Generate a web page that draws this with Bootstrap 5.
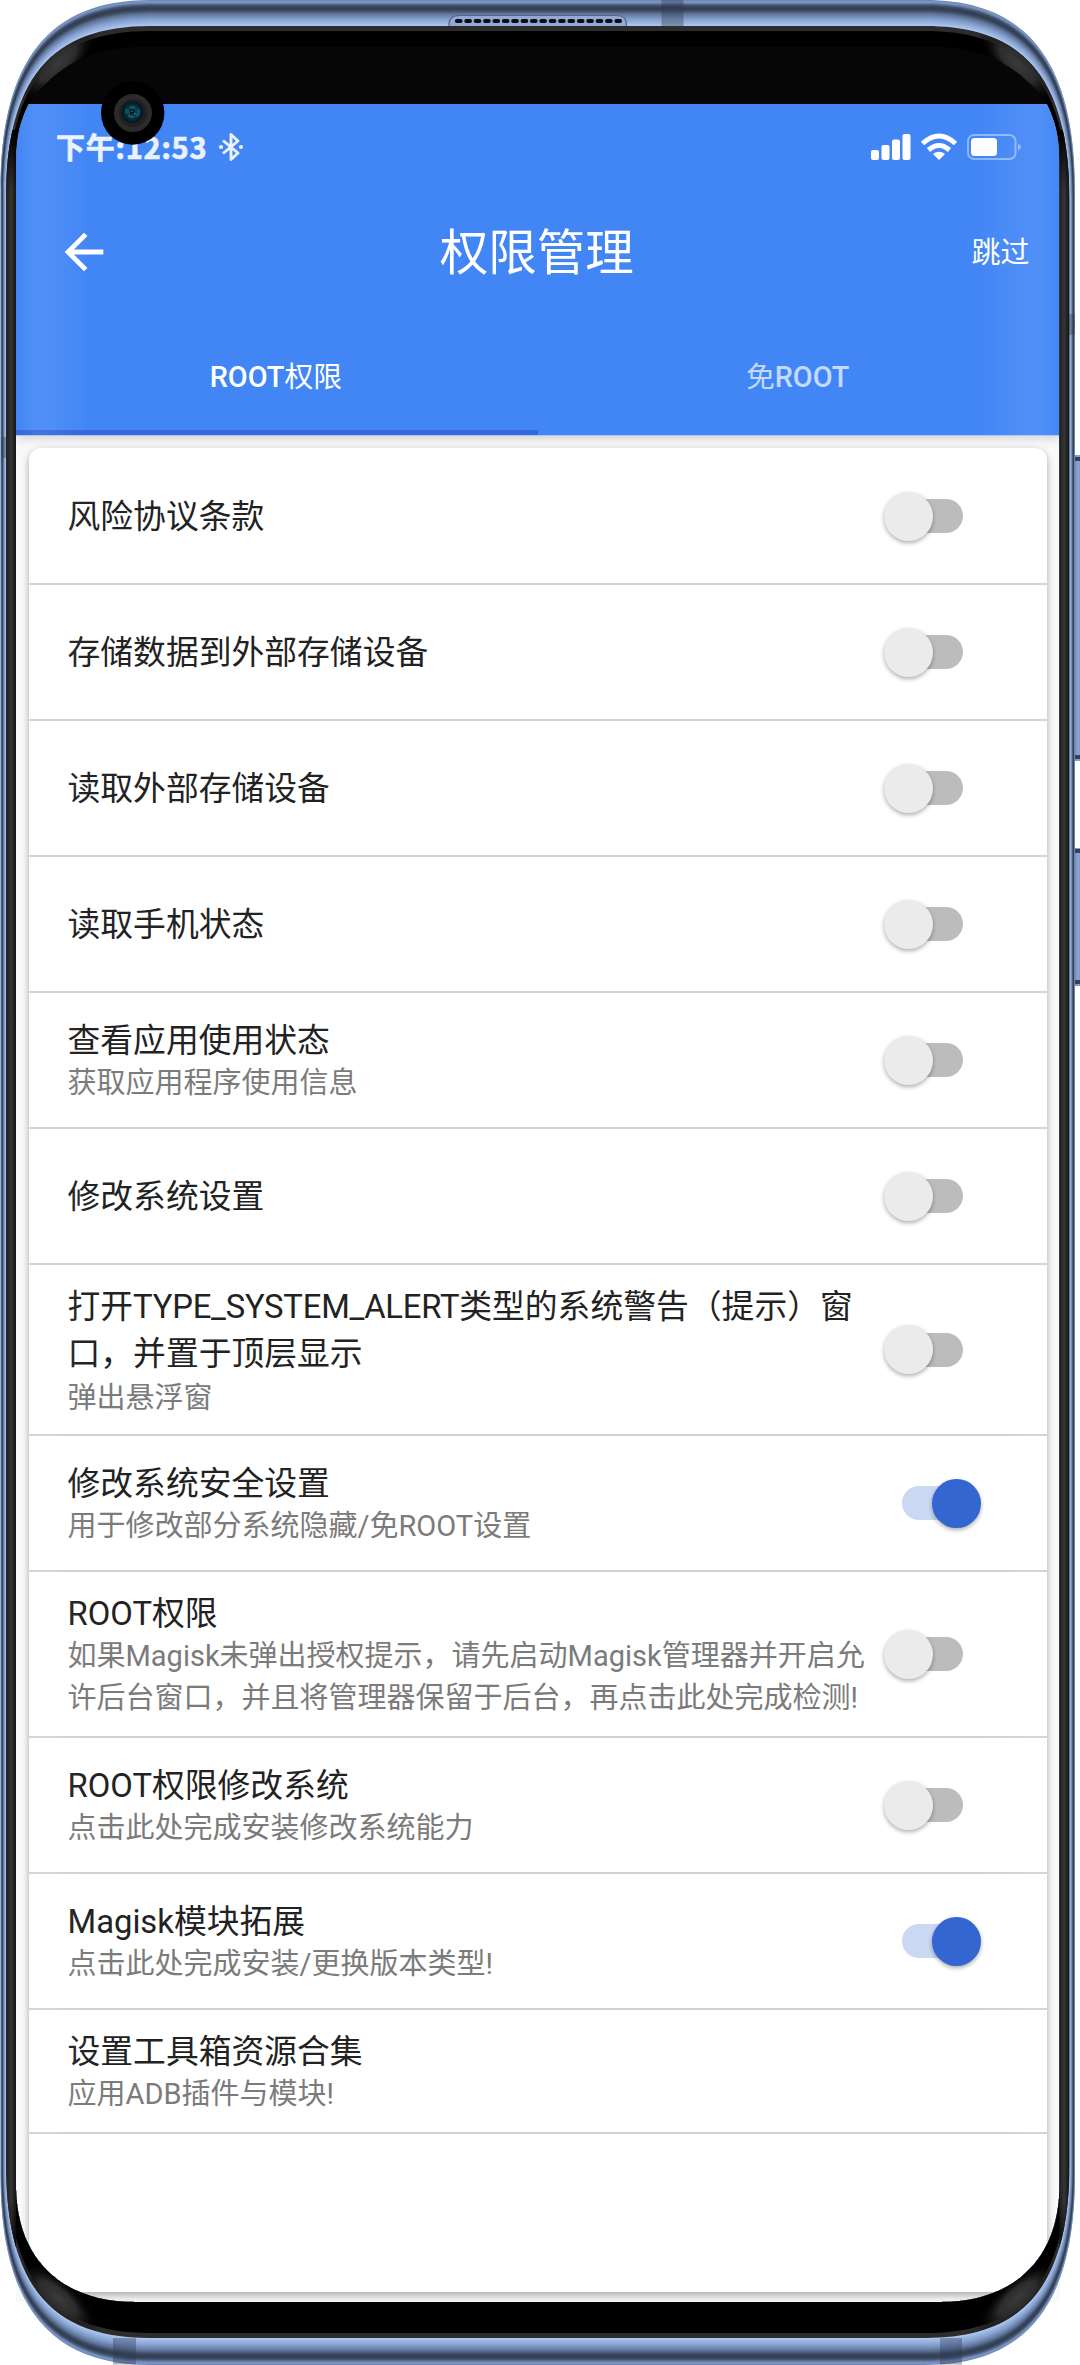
<!DOCTYPE html>
<html lang="zh-CN">
<head>
<meta charset="utf-8">
<meta name="viewport" content="width=device-width, initial-scale=1">
<title>权限管理</title>
<link href="https://cdn.jsdelivr.net/npm/bootstrap@5.3.0/dist/css/bootstrap.min.css" rel="stylesheet">
<style>
  body { font-family: Roboto, "Noto Sans CJK SC", sans-serif; background: #fff; }
  .phone { width: 1080px; height: 2365px; padding: 104px 0 0 16px; }
  .frame { left: 0; top: 0; z-index: 5; pointer-events: none; }
  .screen { width: 1043.5px; height: 2198px; background: #f9f9f9; }
  .glow { inset: 0; z-index: 3; pointer-events: none;
    background:
      linear-gradient(90deg, rgba(255,255,255,0) 0, rgba(255,255,255,.08) 20px, rgba(255,255,255,.07) 34px, rgba(255,255,255,0) 72px),
      linear-gradient(270deg, rgba(255,255,255,0) 0, rgba(255,255,255,.08) 20px, rgba(255,255,255,.07) 34px, rgba(255,255,255,0) 82px); }
  .topbar { height: 332px; background: #4286f6; color: #fff; border-bottom: 1px solid #a9c6f8;
    box-shadow: 0 2px 10px rgba(0,0,0,.18); z-index: 1; }
  .status { height: 86px; padding: 0 37px 0 40px; }
  .clock { font: 700 29px/1 "Noto Sans CJK SC", sans-serif; letter-spacing: .75px; color: #ebf2fe; padding-bottom: 2px; -webkit-text-stroke: .7px #ebf2fe; }
  .appbar { height: 124px; padding: 0 30px 0 39px; }
  .app-title { font-size: 48.5px; line-height: 1; padding: 5px 11px 0 0; }
  .skip { font-size: 29px; line-height: 1; padding-top: 3px; }
  .tabs { height: 121px; }
  .tab-item { font-size: 28.8px; font-weight: 500; border-bottom: 5px solid transparent; padding: 12px 2px 0 0; color: #c3dafc; }
  .tab-item.current { color: #fff; border-color: #3468d8; }
  .tab-item span { font-weight: 400; }
  .panel { margin: 12px 13px 0 13px; padding-top: 1px; height: 1844px; background: #fff; border-radius: 12px 12px 0 0;
    box-shadow: 0 2px 7px rgba(0,0,0,.22), 0 5px 8px rgba(0,0,0,.14); }
  .perm { height: 136px; padding: 0 84px 0 38.5px; border-bottom: 2px solid #d2d2d2; }
  .perm.tall { height: 171px; }
  .perm.mid { height: 166px; }
  .perm.last { height: 124px; }
  .p-title { font-size: 32.8px; line-height: 43.5px; color: #222; white-space: nowrap; padding-top: 4px; }
  .p-title.double { line-height: 47.5px; margin-bottom: -2px; }
  .p-title.double span { letter-spacing: -.22px; }
  .p-sub { font-size: 29px; line-height: 42.5px; margin-top: -1.5px; color: #7b7b7b; white-space: nowrap; }
  .toggle { width: 97px; height: 49px; padding: 0 18px; margin-right: -18px; }
  .toggle .track { width: 61px; height: 34px; border-radius: 17px; background: #bcbcbc; }
  .toggle .thumb { width: 49px; height: 49px; top: 0; left: 0; border-radius: 50%; background: #ebebeb;
    box-shadow: 0 2px 4px rgba(0,0,0,.32); }
  .toggle.on .track { background: #cad8f3; }
  .toggle.on .thumb { left: 48px; background: #3366d1; }
</style>
</head>
<body>
<div class="phone position-relative overflow-hidden">
  <main class="screen position-relative d-flex flex-column overflow-hidden">
    <header class="topbar position-relative flex-shrink-0">
      <div class="status d-flex align-items-center justify-content-between">
        <div class="d-flex align-items-center">
          <span class="clock">下午:12:53</span>
          <svg class="ms-2" width="32" height="32" viewBox="0 0 30 32" fill="none" stroke="#ebf2fe" stroke-width="2.900" stroke-linejoin="round"><path d="M7 9.500 22 22 15 28.500V3.500L22 10 7 22.500"/><circle cx="5" cy="16" r="2.100" fill="#ebf2fe" stroke="none"/><circle cx="25" cy="16" r="2.100" fill="#ebf2fe" stroke="none"/></svg>
        </div>
        <svg width="152" height="30" viewBox="0 0 152 30" fill="#fff">
          <rect x="0" y="18" width="8" height="10" rx="2"/><rect x="10.500" y="13" width="8" height="15" rx="2"/><rect x="21" y="7.500" width="8" height="20.500" rx="2"/><rect x="31.500" y="2" width="8" height="26" rx="2"/>
          <g fill="none" stroke="#fff" stroke-width="5"><path d="M51.500 11.500Q68 -3.500 84.500 11.500"/><path d="M57.500 18Q68 9 78.500 18"/></g>
          <path d="M62 22Q68 17.500 74 22L68 28Z"/>
          <rect x="97" y="3" width="47.500" height="24" rx="6" fill="none" stroke="#8db6fa" stroke-width="2"/><rect x="100" y="6" width="26" height="18" rx="3.500"/><path d="M147 11.500Q150 13 150 15T147 18.500Z" fill="#8db6fa"/>
        </svg>
      </div>
      <div class="appbar d-flex align-items-center justify-content-between">
        <svg width="58" height="58" viewBox="0 0 24 24" fill="#fff"><path d="M20 11H7.830l5.590-5.590L12 4l-8 8 8 8 1.410-1.410L7.830 13H20v-2z"/></svg>
        <div class="app-title">权限管理</div>
        <div class="skip">跳过</div>
      </div>
      <nav class="tabs d-flex text-center">
        <div class="tab-item current flex-fill w-50 d-flex align-items-center justify-content-center">ROOT<span>权限</span></div>
        <div class="tab-item flex-fill w-50 d-flex align-items-center justify-content-center"><span>免</span>ROOT</div>
      </nav>
    </header>
    <section class="panel flex-shrink-0">
      <div class="perm d-flex align-items-center justify-content-between"><div class="p-title">风险协议条款</div><div class="toggle position-relative d-flex align-items-center"><div class="track"></div><div class="thumb position-absolute"></div></div></div>
      <div class="perm d-flex align-items-center justify-content-between"><div class="p-title">存储数据到外部存储设备</div><div class="toggle position-relative d-flex align-items-center"><div class="track"></div><div class="thumb position-absolute"></div></div></div>
      <div class="perm d-flex align-items-center justify-content-between"><div class="p-title">读取外部存储设备</div><div class="toggle position-relative d-flex align-items-center"><div class="track"></div><div class="thumb position-absolute"></div></div></div>
      <div class="perm d-flex align-items-center justify-content-between"><div class="p-title">读取手机状态</div><div class="toggle position-relative d-flex align-items-center"><div class="track"></div><div class="thumb position-absolute"></div></div></div>
      <div class="perm d-flex align-items-center justify-content-between"><div><div class="p-title">查看应用使用状态</div><div class="p-sub">获取应用程序使用信息</div></div><div class="toggle position-relative d-flex align-items-center"><div class="track"></div><div class="thumb position-absolute"></div></div></div>
      <div class="perm d-flex align-items-center justify-content-between"><div class="p-title">修改系统设置</div><div class="toggle position-relative d-flex align-items-center"><div class="track"></div><div class="thumb position-absolute"></div></div></div>
      <div class="perm tall d-flex align-items-center justify-content-between"><div><div class="p-title double">打开<span>TYPE_SYSTEM_ALERT</span>类型的系统警告（提示）窗<br>口，并置于顶层显示</div><div class="p-sub">弹出悬浮窗</div></div><div class="toggle position-relative d-flex align-items-center"><div class="track"></div><div class="thumb position-absolute"></div></div></div>
      <div class="perm d-flex align-items-center justify-content-between"><div><div class="p-title">修改系统安全设置</div><div class="p-sub">用于修改部分系统隐藏/免ROOT设置</div></div><div class="toggle on position-relative d-flex align-items-center"><div class="track"></div><div class="thumb position-absolute"></div></div></div>
      <div class="perm mid d-flex align-items-center justify-content-between"><div><div class="p-title">ROOT权限</div><div class="p-sub">如果Magisk未弹出授权提示，请先启动Magisk管理器并开启允<br>许后台窗口，并且将管理器保留于后台，再点击此处完成检测!</div></div><div class="toggle position-relative d-flex align-items-center"><div class="track"></div><div class="thumb position-absolute"></div></div></div>
      <div class="perm d-flex align-items-center justify-content-between"><div><div class="p-title">ROOT权限修改系统</div><div class="p-sub">点击此处完成安装修改系统能力</div></div><div class="toggle position-relative d-flex align-items-center"><div class="track"></div><div class="thumb position-absolute"></div></div></div>
      <div class="perm d-flex align-items-center justify-content-between"><div><div class="p-title">Magisk模块拓展</div><div class="p-sub">点击此处完成安装/更换版本类型!</div></div><div class="toggle on position-relative d-flex align-items-center"><div class="track"></div><div class="thumb position-absolute"></div></div></div>
      <div class="perm last d-flex align-items-center"><div><div class="p-title">设置工具箱资源合集</div><div class="p-sub">应用ADB插件与模块!</div></div></div>
    </section>
    <div class="glow position-absolute"></div>
  </main>

  <svg class="frame position-absolute" width="1080" height="2365" viewBox="0 0 1080 2365">
    <defs>
      <linearGradient id="key" x1="0" x2="1" y1="0" y2="0"><stop offset="0" stop-color="#45567a"/><stop offset=".3" stop-color="#7089ba"/><stop offset=".6" stop-color="#8ba5d8"/><stop offset="1" stop-color="#6f89ba"/></linearGradient>
      <linearGradient id="side" x1="0" x2="1" y1="0" y2="0"><stop offset="0" stop-color="#202020"/><stop offset=".5" stop-color="#353535"/><stop offset="1" stop-color="#151515"/></linearGradient>
      <linearGradient id="fadeDown" x1="0" x2="0" y1="0" y2="1"><stop offset="0" stop-color="#000"/><stop offset="1" stop-color="#000" stop-opacity="0"/></linearGradient>
      <linearGradient id="fadeUp" x1="0" x2="0" y1="1" y2="0"><stop offset="0" stop-color="#000"/><stop offset="1" stop-color="#000" stop-opacity="0"/></linearGradient>
      <radialGradient id="shine"><stop offset="0" stop-color="#3a3a3a"/><stop offset=".45" stop-color="#2c2c2c"/><stop offset="1" stop-color="#000" stop-opacity="0"/></radialGradient>
      <radialGradient id="lens"><stop offset="0" stop-color="#0c5560"/><stop offset=".35" stop-color="#0a4a58"/><stop offset=".6" stop-color="#07303f"/><stop offset="1" stop-color="#0b1118"/></radialGradient>
      <clipPath id="ring"><path clip-rule="evenodd" id="ringPath"/></clipPath>
    </defs>
    <g id="keys">
      <rect x="1072" y="455" width="10" height="306" rx="2" fill="url(#key)"/><path d="M1073 457h7v4h-7zM1073 755h7v4h-7z" fill="#344158"/>
      <rect x="1072" y="848" width="10" height="138" rx="2" fill="url(#key)"/><path d="M1073 849h7v4h-7zM1073 980h7v4h-7z" fill="#344158"/>
    </g>
    <g id="metal"></g>
    <g fill="#2d3a52" fill-opacity=".38"><path d="M661.500 0h22v26h-22zM113 2338h23v26.500h-23zM940 2338h22v26.500h-22zM1 437h5v21h-5zM1069 314h6v21h-6z"/></g>
    <path d="M449 26V24Q449 15.500 460 15.500H616Q626.500 15.500 626.500 24V26" fill="#91a9d4" stroke="#566785" stroke-width="1.200"/>
    <path d="M457 21H620" stroke="#0b0d12" stroke-width="4.200" stroke-linecap="round" stroke-dasharray="3.500 5.880"/>
    <g id="bezel"></g>
    <circle cx="132.700" cy="113" r="31.700" fill="#000"/>
    <circle cx="133" cy="113" r="16.500" fill="#202020" stroke="#2b2b2b" stroke-width="5"/>
    <circle cx="132.500" cy="112" r="11" fill="url(#lens)"/>
    <ellipse cx="132.500" cy="112" rx="6.500" ry="5" fill="none" stroke="#0e6a78" stroke-width="1.400" stroke-dasharray="5 3"/>
    <path d="M130 109.500h5v5h-5z" fill="#03181d"/><path d="M131.500 111h1v1h-1zM134 113h1v1h-1z" fill="#4fc3cf"/>
  </svg>
</div>
<script>
  // Rounded phone silhouette: side inset x, top y, bottom b, corner extents and handles
  function outline(x, y, b, ex, ey, hx, hy) {
    const r = 1075.5 - x, X = v => 1075.5 - v, B = v => b - (v - y);
    return `M${ex} ${y}H${X(ex)}C${X(hx)} ${y} ${r} ${hy} ${r} ${ey}V${B(ey)}C${r} ${B(hy)} ${X(hx)} ${b} ${X(ex)} ${b}H${ex}C${hx} ${b} ${x} ${B(hy)} ${x} ${B(ey)}V${ey}C${x} ${hy} ${hx} ${y} ${ex} ${y}Z`;
  }
  const mix = (a, b, t) => a + (b - a) * t;
  const tones = [[0,110,137,184],[.06,128,156,203],[.2,62,77,103],[.3,50,61,80],[.4,62,77,102],[.5,92,113,148],[.7,130,157,203],[.95,169,195,238],[1,190,208,240]];
  function tone(t) {
    let i = 1; while (tones[i][0] < t) i++;
    const p = tones[i - 1], q = tones[i], k = (t - p[0]) / (q[0] - p[0]);
    return `rgb(${[1,2,3].map(n => Math.round(mix(p[n], q[n], k))).join()})`;
  }
  // Opening of the display inside the bezel
  const hole = 'M28.500 104H1047C1055 120 1059.500 136 1059.500 160V2190C1057.500 2258 1015.500 2302 940.500 2302H135C60 2302 18 2258 16 2190V160C16 136 20.500 120 28.500 104Z';
  let metal = '';
  for (let i = 0; i < 27; i++) {
    const t = i / 26;
    metal += `<path fill="${tone(t)}" fill-rule="evenodd" d="${outline(mix(0.5,6,t), mix(0,26,t), mix(2365,2338,t), 150, mix(190,200,t), mix(48,52,t), mix(62,78,t))}${hole}"/>`;
  }
  document.getElementById('metal').innerHTML = metal;
  const body = outline(6, 26, 2338, 150, 200, 52, 78) + hole;
  document.getElementById('ringPath').setAttribute('d', body);
  document.getElementById('bezel').innerHTML =
    `<path fill="#2c2c2c" fill-rule="evenodd" d="${body}"/>` +
    `<path fill="#000" fill-rule="evenodd" d="${outline(8, 31, 2333, 150, 200, 54, 82)}${hole}"/>` +
    `<g clip-path="url(#ring)">` +
    [6.5, 1059.5].map(x => `<path fill="url(#side)" d="M${x} 130h9.500v2140h-9.500z"/><path fill="url(#fadeDown)" d="M${x} 130h9.500v60h-9.500z"/><path fill="url(#fadeUp)" d="M${x} 2200h9.500v71h-9.500z"/>`).join('') +
    [[58,64,-44],[1017.5,64,44],[58,2298,42],[1017.5,2298,-42]].map(([x,y,a]) => `<ellipse cx="${x}" cy="${y}" rx="52" ry="19" fill="url(#shine)" transform="rotate(${a} ${x} ${y})"/>`).join('') +
    `<path fill="#060606" d="M135 47C92 48 54 66 28.500 105H1047C1021.500 66 983.500 48 940.500 47Z"/></g>`;
</script>
<script src="https://cdn.jsdelivr.net/npm/bootstrap@5.3.0/dist/js/bootstrap.bundle.min.js"></script>
</body>
</html>
